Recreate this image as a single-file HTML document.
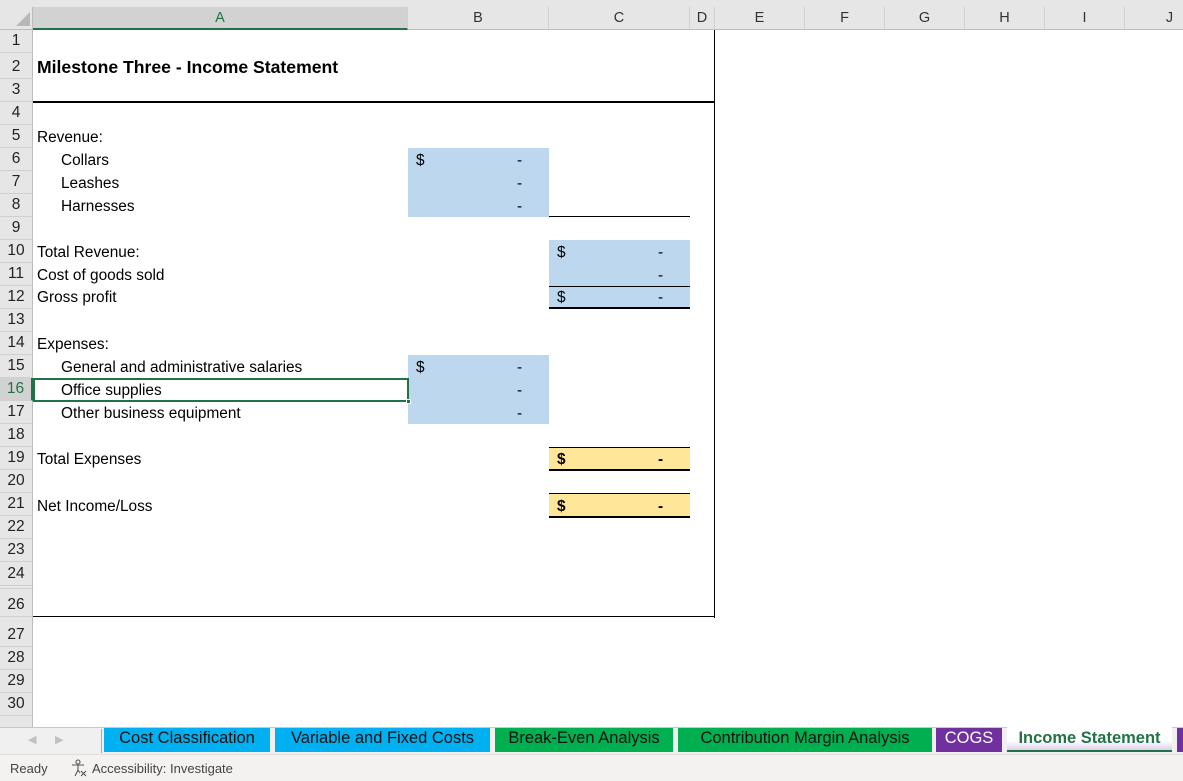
<!DOCTYPE html>
<html><head><style>
*{margin:0;padding:0;box-sizing:border-box}
body{width:1183px;height:781px;overflow:hidden;background:#fff;font-family:"Liberation Sans",sans-serif;position:relative;font-size:15.4px;color:#000}
.a{position:absolute}
.ch{position:absolute;top:7px;height:23px;background:#e6e6e6;border-right:1px solid #d0d0d0;border-bottom:1px solid #bdbdbd;text-align:center;line-height:22px;font-size:14.5px;color:#333}
.rh{position:absolute;left:0;width:33px;background:#e6e6e6;border-bottom:1px solid #d0d0d0;border-right:1px solid #bdbdbd;text-align:center;font-size:15.5px;color:#222;display:flex;align-items:flex-end;justify-content:center;padding-bottom:2px}
.t{position:absolute;white-space:nowrap;line-height:20px}
.blue{position:absolute;background:#bdd7ee}
.yel{position:absolute;background:#ffe699}
.tab{position:absolute;top:728px;height:24px;line-height:21px;font-size:16.5px;text-align:center;color:#111}
</style></head><body>
<div class="a" style="left:0;top:0;width:1183px;height:7px;background:#e6e6e6"></div>
<div class="a" style="left:0;top:7px;width:33px;height:23px;background:#e6e6e6;border-right:1px solid #bdbdbd;border-bottom:1px solid #bdbdbd"></div>
<svg class="a" style="left:16px;top:12px" width="14" height="14"><polygon points="14,0 14,14 0,14" fill="#b8b8b8"/></svg>
<div class="ch" style="left:33px;width:375px;background:#d2d2d2;color:#217346;border-bottom:2px solid #217346">A</div>
<div class="ch" style="left:408px;width:141px">B</div>
<div class="ch" style="left:549px;width:141px">C</div>
<div class="ch" style="left:690px;width:25px">D</div>
<div class="ch" style="left:715px;width:90px">E</div>
<div class="ch" style="left:805px;width:80px">F</div>
<div class="ch" style="left:885px;width:80px">G</div>
<div class="ch" style="left:965px;width:80px">H</div>
<div class="ch" style="left:1045px;width:80px">I</div>
<div class="ch" style="left:1125px;width:90px">J</div>

<div class="rh" style="top:30px;height:23px">1</div>
<div class="rh" style="top:53px;height:26px">2</div>
<div class="rh" style="top:79px;height:23px">3</div>
<div class="rh" style="top:102px;height:23px">4</div>
<div class="rh" style="top:125px;height:23px">5</div>
<div class="rh" style="top:148px;height:23px">6</div>
<div class="rh" style="top:171px;height:23px">7</div>
<div class="rh" style="top:194px;height:23px">8</div>
<div class="rh" style="top:217px;height:23px">9</div>
<div class="rh" style="top:240px;height:23px">10</div>
<div class="rh" style="top:263px;height:23px">11</div>
<div class="rh" style="top:286px;height:23px">12</div>
<div class="rh" style="top:309px;height:23px">13</div>
<div class="rh" style="top:332px;height:23px">14</div>
<div class="rh" style="top:355px;height:23px">15</div>
<div class="rh" style="top:378px;height:23px;background:#d2d2d2;color:#217346;border-right:2px solid #217346">16</div>
<div class="rh" style="top:401px;height:23px">17</div>
<div class="rh" style="top:424px;height:23px">18</div>
<div class="rh" style="top:447px;height:23px">19</div>
<div class="rh" style="top:470px;height:23px">20</div>
<div class="rh" style="top:493px;height:23px">21</div>
<div class="rh" style="top:516px;height:23px">22</div>
<div class="rh" style="top:539px;height:23px">23</div>
<div class="rh" style="top:562px;height:24px">24</div>
<div class="rh" style="top:586px;height:3px;padding:0"></div>
<div class="rh" style="top:589px;height:28px">26</div>
<div class="rh" style="top:617px;height:30px">27</div>
<div class="rh" style="top:647px;height:23px">28</div>
<div class="rh" style="top:670px;height:23px">29</div>
<div class="rh" style="top:693px;height:23px">30</div>
<div class="rh" style="top:716px;height:11px;border-bottom:none"></div>

<div class="a" style="left:714px;top:30px;width:1px;height:588px;background:#000"></div>
<div class="a" style="left:33px;top:616px;width:682px;height:1px;background:#000"></div>
<div class="a" style="left:33px;top:101px;width:682px;height:2px;background:#000"></div>

<div class="t" style="left:37px;top:57px;font-weight:bold;font-size:17.6px">Milestone Three - Income Statement</div>

<div class="blue" style="left:408px;top:148px;width:141px;height:69px"></div>
<div class="blue" style="left:549px;top:240px;width:141px;height:69px"></div>
<div class="blue" style="left:408px;top:355px;width:141px;height:69px"></div>
<div class="yel" style="left:549px;top:447px;width:141px;height:23px"></div>
<div class="yel" style="left:549px;top:493px;width:141px;height:23px"></div>
<div class="a" style="left:549px;top:216px;width:141px;height:1px;background:#000"></div>
<div class="a" style="left:549px;top:286px;width:141px;height:1px;background:#000"></div>
<div class="a" style="left:549px;top:307px;width:141px;height:2px;background:#000"></div>
<div class="a" style="left:549px;top:447px;width:141px;height:1px;background:#000"></div>
<div class="a" style="left:549px;top:469px;width:141px;height:2px;background:#000"></div>
<div class="a" style="left:549px;top:493px;width:141px;height:1px;background:#000"></div>
<div class="a" style="left:549px;top:516px;width:141px;height:2px;background:#000"></div>

<div class="t" style="left:37px;top:128px">Revenue:</div>
<div class="t" style="left:61px;top:151px">Collars</div>
<div class="t" style="left:61px;top:174px">Leashes</div>
<div class="t" style="left:61px;top:197px">Harnesses</div>
<div class="t" style="left:37px;top:243px">Total Revenue:</div>
<div class="t" style="left:37px;top:266px">Cost of goods sold</div>
<div class="t" style="left:37px;top:288px">Gross profit</div>
<div class="t" style="left:37px;top:335px">Expenses:</div>
<div class="t" style="left:61px;top:358px">General and administrative salaries</div>
<div class="t" style="left:61px;top:381px">Office supplies</div>
<div class="t" style="left:61px;top:404px">Other business equipment</div>
<div class="t" style="left:37px;top:450px">Total Expenses</div>
<div class="t" style="left:37px;top:497px">Net Income/Loss</div>

<div class="t" style="left:416px;top:151px">$</div><div class="t" style="left:517px;top:151px">-</div>
<div class="t" style="left:517px;top:174px">-</div>
<div class="t" style="left:517px;top:197px">-</div>
<div class="t" style="left:557px;top:243px">$</div><div class="t" style="left:658px;top:243px">-</div>
<div class="t" style="left:658px;top:266px">-</div>
<div class="t" style="left:557px;top:288px">$</div><div class="t" style="left:658px;top:288px">-</div>
<div class="t" style="left:416px;top:358px">$</div><div class="t" style="left:517px;top:358px">-</div>
<div class="t" style="left:517px;top:381px">-</div>
<div class="t" style="left:517px;top:404px">-</div>
<div class="t" style="left:557px;top:450px;font-weight:bold">$</div><div class="t" style="left:658px;top:450px;font-weight:bold">-</div>
<div class="t" style="left:557px;top:497px;font-weight:bold">$</div><div class="t" style="left:658px;top:497px;font-weight:bold">-</div>

<div class="a" style="left:33px;top:378px;width:376px;height:24px;border:2px solid #217346"></div>
<div class="a" style="left:406px;top:399px;width:5px;height:5px;background:#217346;border:1px solid #fff"></div>

<div class="a" style="left:0;top:727px;width:1183px;height:27px;background:#f0f0f0;border-top:1px solid #c8c8c8"></div>
<div class="a" style="left:28px;top:733px;color:#c0c0c0;font-size:11px">&#9664;</div>
<div class="a" style="left:55px;top:733px;color:#c0c0c0;font-size:11px">&#9654;</div>
<div class="a" style="left:101px;top:729px;width:1px;height:24px;background:#aaa"></div>
<div class="tab" style="left:104px;width:166px;background:#00b0f0">Cost Classification</div>
<div class="tab" style="left:275px;width:215px;background:#00b0f0">Variable and Fixed Costs</div>
<div class="tab" style="left:495px;width:178px;background:#00b050">Break-Even Analysis</div>
<div class="tab" style="left:678px;width:254px;background:#00b050">Contribution Margin Analysis</div>
<div class="tab" style="left:936px;width:66px;background:#7030a0;color:#fff">COGS</div>
<div class="tab" style="left:1007px;width:165px;top:727px;height:25px;line-height:22px;background:linear-gradient(#fff 60%,#ddd0ee);color:#217346;font-weight:bold;border-bottom:2px solid #217346">Income Statement</div>
<div class="tab" style="left:1177px;width:6px;background:#7030a0"></div>

<div class="a" style="left:0;top:754px;width:1183px;height:27px;background:#f3f2f1;border-top:1px solid #ddd"></div>
<div class="a" style="left:10px;top:761px;font-size:13px;color:#444">Ready</div>
<svg class="a" style="left:70px;top:759px" width="18" height="18" viewBox="0 0 18 18" fill="none" stroke="#555" stroke-width="1.1"><circle cx="8" cy="3" r="2"/><path d="M2 6 L14 6 M8 6 L8 11 L5 17 M8 11 L10 14 M11 12 L16 17 M16 12 L11 17"/></svg>
<div class="a" style="left:92px;top:761px;font-size:13px;color:#444">Accessibility: Investigate</div>
</body></html>
